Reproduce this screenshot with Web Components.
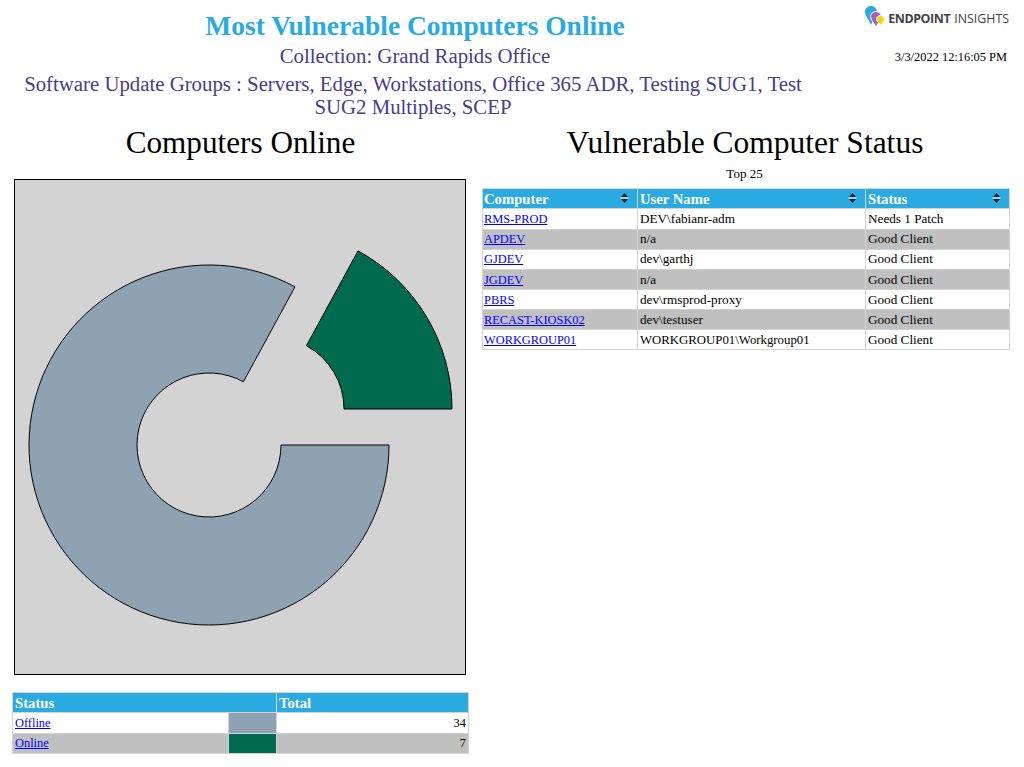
<!DOCTYPE html>
<html lang="en"><head><meta charset="utf-8"><title>Most Vulnerable Computers Online</title>
<style>
html,body{margin:0;padding:0;background:#fff;font-family:"Liberation Serif","Times New Roman",serif;color:#000}
</style></head><body>
<report-page>
  <report-header slot="header"></report-header>
  <report-section slot="left" heading="Computers Online">
    <donut-chart></donut-chart>
    <data-table id="legend"></data-table>
  </report-section>
  <report-section slot="right" heading="Vulnerable Computer Status" note="Top 25" style="--h2-size:31.500px;--h2-shift:2px">
    <data-table id="status"></data-table>
  </report-section>
</report-page>
<script>
class ReportPage extends HTMLElement{constructor(){super();this.attachShadow({mode:'open'}).innerHTML=`<style>
:host{display:block;width:1024px}
.cols{display:flex;gap:14px;padding:0 14px 0 13px;align-items:flex-start}
.l{width:455px;flex:none}.r{width:528px;flex:none}
</style><slot name="header"></slot><div class="cols"><div class="l"><slot name="left"></slot></div><div class="r"><slot name="right"></slot></div></div>`}}
class ReportHeader extends HTMLElement{constructor(){super();this.attachShadow({mode:'open'}).innerHTML=`<style>
:host{display:flex;height:120px;box-sizing:border-box;padding:0 14px 0 8px}
.t{width:814px;flex:none;text-align:center;padding-top:11px}
h1{margin:0;font-size:27.500px;line-height:30px;font-weight:bold;color:#29abe2}
.s{font-size:20.800px;line-height:23px;color:#483d8b}
.c{margin-top:3px}
.g{margin-top:5px;padding:0 14px 0 10px}
.a{flex:1;display:flex;flex-direction:column;align-items:flex-end}
.logo{display:flex;align-items:flex-start;margin-top:5px;margin-right:1px;height:22px;font:12.400px/22px "Open Sans","Liberation Sans",sans-serif;color:#3f4246;white-space:nowrap}
.logo svg{flex:none}
.logo b{font-weight:700;margin:3px 0 0 2px;letter-spacing:-.4px}
.logo span{margin:3px 0 0 4px}
.d{margin-top:23px;margin-right:3px;font-size:12.400px;line-height:14px}
</style><div class="t"><h1>Most Vulnerable Computers Online</h1>
<div class="s c">Collection: Grand Rapids Office</div>
<div class="s g">Software Update Groups : Servers, Edge, Workstations, Office 365 ADR, Testing SUG1, Test SUG2 Multiples, SCEP</div></div>
<div class="a"><div class="logo"><svg width="22" height="24" viewBox="0 0 22 24" aria-hidden="true">
<path d="M7 1C3.600 1 1 3.600 1 6.800c0 4 3.600 7.600 6 13.200 2.400-5.600 6-9.200 6-13.200C13 3.600 10.400 1 7 1Z" fill="#2cabe2"/>
<path d="M12 6.500c-3 0-5.400 2.300-5.400 5.200 0 3.500 3.300 5.800 5.400 10.300 2.100-4.500 5.400-6.800 5.400-10.300 0-2.900-2.400-5.200-5.400-5.200Z" fill="#a45cc8" stroke="#fff"/>
<path d="M16.500 10.500c-2.200 0-4 1.700-4 3.800 0 2.300 2.500 3.400 4 6.200 1.500-2.800 4-3.900 4-6.200 0-2.100-1.800-3.800-4-3.800Z" fill="#fbd40f" stroke="#fff"/>
</svg><b>ENDPOINT</b><span>INSIGHTS</span></div><div class="d">3/3/2022 12:16:05 PM</div></div>`}}
class ReportSection extends HTMLElement{connectedCallback(){if(this.shadowRoot)return;const note=this.getAttribute('note');this.attachShadow({mode:'open'}).innerHTML=`<style>
:host{display:block}
h2{margin:0;padding:1px var(--h2-shift,0) 0 0;font-size:var(--h2-size,31.200px);line-height:44px;font-weight:normal;text-align:center}
.n{font-size:13px;line-height:14px;text-align:center;margin:2px 3px 7px 0}
.sp{height:14px}
</style><h2>${this.getAttribute('heading')}</h2>${note?`<div class="n">${note}</div>`:'<div class="sp"></div>'}<slot></slot>`}}
class DonutChart extends HTMLElement{constructor(){super();
const seg=(cx,cy,a0,a1)=>{const R=180,r=72,p=(q,a)=>[(cx+q*Math.cos(a)).toFixed(2),(cy+q*Math.sin(a)).toFixed(2)].join(' ');const big=(a1-a0)>Math.PI?1:0;return `M${p(r,a0)}L${p(R,a0)}A${R} ${R} 0 ${big} 1 ${p(R,a1)}L${p(r,a1)}A${r} ${r} 0 ${big} 0 ${p(r,a0)}Z`};
const split=2*Math.PI*34/41;
this.attachShadow({mode:'open'}).innerHTML=`<style>
:host{display:block;width:452px;height:496px;margin-left:1px;box-sizing:border-box;border:1px solid #000;background:#d3d3d3}
svg{display:block}
</style><svg width="450" height="494" viewBox="15 180 450 494" role="img" aria-label="Computers Online">
<path d="${seg(209,445,0,split)}" fill="#8fa2b2" stroke="#000"/>
<path d="${seg(272,409,split,2*Math.PI)}" fill="#006a4e" stroke="#000"/></svg>`}}
class DataTable extends HTMLElement{
set data(d){const sortIcon=`<svg class="si" width="9" height="12" viewBox="0 0 9 12" aria-hidden="true"><path d="M4.500 1 8 5H1Z M1 7h7L4.500 11Z" fill="#222"/><path d="M.5 6h8" stroke="#fff"/></svg>`;
const root=this.shadowRoot||this.attachShadow({mode:'open'});
root.innerHTML=`<style>
:host{display:block;margin-top:${d.top||0}px;margin-left:${d.left||0}px}
table{border-collapse:collapse;table-layout:fixed;width:${d.width}px;font-size:13.200px}
th,td{border:1px solid #d3d3d3;padding:0 2px;overflow:hidden;white-space:nowrap;line-height:14px}
th{background:#29abe2;color:#fff;font-size:14.700px;font-weight:bold;text-align:left;height:19px;position:relative}
td{height:19px}
tbody tr:first-child td{height:20px}
tbody tr:nth-child(2) td,tbody tr:nth-child(3) td{height:17px;padding-bottom:2px}
tr:nth-child(even) td{background:#c0c0c0}
a{color:#00f;text-decoration:underline;font-size:12.400px}
.si{position:absolute;right:8px;top:3px}
.num{text-align:right;font-size:12.400px}
.w{font-size:12.800px}
td.sw{padding:0}
${d.extra||''}
</style><table><colgroup>${d.cols.map(w=>`<col style="width:${w}px">`).join('')}</colgroup>
<thead><tr>${d.head.map(h=>`<th${h.span?` colspan="${h.span}"`:''}>${h.t}${d.sort?sortIcon:''}</th>`).join('')}</tr></thead>
<tbody>${d.rows.map(r=>`<tr>${r.map(c=>c.a?`<td><a href="#">${c.a}</a></td>`:c.sw?`<td class="sw" style="background:${c.sw}"></td>`:c.n?`<td class="num">${c.n}</td>`:c.w?`<td class="w">${c.w}</td>`:`<td>${c}</td>`).join('')}</tr>`).join('')}</tbody></table>`}}
customElements.define('report-page',ReportPage);
customElements.define('report-header',ReportHeader);
customElements.define('report-section',ReportSection);
customElements.define('donut-chart',DonutChart);
customElements.define('data-table',DataTable);
document.getElementById('legend').data={top:17,left:-1,width:456,cols:[216,48,192],
 head:[{t:'Status',span:2},{t:'Total'}],
 rows:[[{a:'Offline'},{sw:'#8fa2b2'},{n:'34'}],[{a:'Online'},{sw:'#006a4e'},{n:'7'}]]};
document.getElementById('status').data={sort:true,width:527,cols:[155,228,144],extra:'th:first-child,td:first-child{padding-left:1px}',
 head:[{t:'Computer'},{t:'User Name'},{t:'Status'}],
 rows:[[{a:'RMS-PROD'},'DEV\\fabianr-adm','Needs 1 Patch'],[{a:'APDEV'},'n/a','Good Client'],[{a:'GJDEV'},'dev\\garthj','Good Client'],[{a:'JGDEV'},'n/a','Good Client'],[{a:'PBRS'},'dev\\rmsprod-proxy','Good Client'],[{a:'RECAST-KIOSK02'},'dev\\testuser','Good Client'],[{a:'WORKGROUP01'},{w:'WORKGROUP01\\Workgroup01'},'Good Client']]};
</script>
</body></html>
